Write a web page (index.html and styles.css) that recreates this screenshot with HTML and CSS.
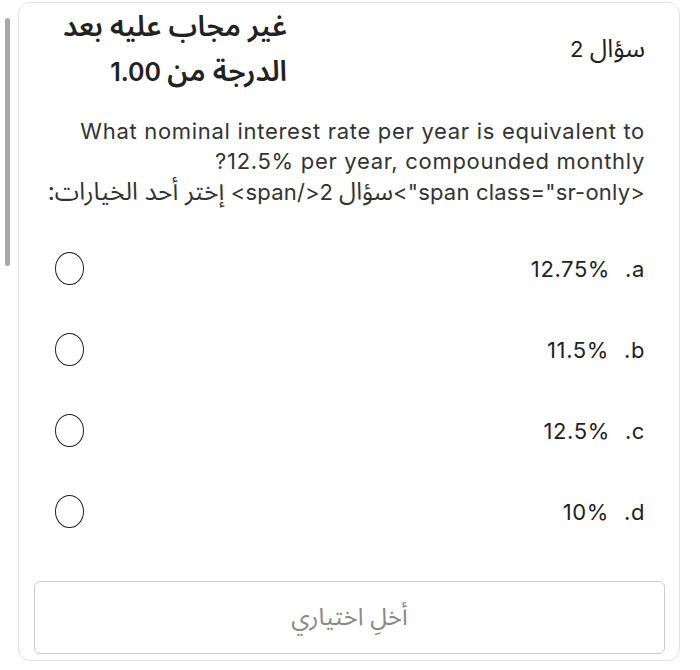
FILE: index.html
```html
<!DOCTYPE html>
<html lang="ar" dir="rtl">
<head>
<meta charset="utf-8">
<link rel="stylesheet" href="styles.css">
</head>
<body>
<div class="scrollbar"></div>
<div class="card">
  <div class="header">
    <div class="qno"><span class="ar">سؤال</span> 2</div>
    <div class="state">
      <div class="state-line"><span class="ar">غير مجاب عليه بعد</span></div>
      <div class="state-line"><span class="ar">الدرجة من</span> 1.00</div>
    </div>
  </div>
  <div class="question">
    <div>What nominal interest rate per year is equivalent to 12.5% per year, compounded monthly?</div>
    <div class="prompt">&lt;span class="sr-only"&gt;<span class="ar">سؤال</span> 2&lt;/span&gt; <span class="ar">إختر أحد الخيارات:</span></div>
  </div>
  <div class="options">
    <div class="option"><span class="num">a.</span><span class="txt">12.75%</span><span class="radio"></span></div>
    <div class="option"><span class="num">b.</span><span class="txt">11.5%</span><span class="radio"></span></div>
    <div class="option"><span class="num">c.</span><span class="txt">12.5%</span><span class="radio"></span></div>
    <div class="option"><span class="num">d.</span><span class="txt">10%</span><span class="radio"></span></div>
  </div>
  <div class="button"><span class="ar">أخلِ اختياري</span></div>
</div>
</body>
</html>
```
FILE: styles.css
```css
html, body {
  margin: 0;
  padding: 0;
  background: #ffffff;
}
body {
  width: 700px;
  height: 670px;
  position: relative;
  overflow: hidden;
  font-family: Inter, "Liberation Sans", "Noto Sans Arabic", "DejaVu Sans", sans-serif;
  color: #222222;
}
.ar {
  font-size: 1.15em;
  letter-spacing: 0;
}
.scrollbar {
  position: absolute;
  left: 5px;
  top: 18px;
  width: 5px;
  height: 248px;
  background: #a8a8a8;
  border-radius: 3px;
}
.card {
  position: absolute;
  left: 18px;
  top: 2px;
  width: 660px;
  height: 657px;
  border: 1.5px solid #e2e2e2;
  border-radius: 12px;
  box-sizing: content-box;
}
.header {
  display: flex;
  justify-content: space-between;
  padding: 1px 34px 0 44px;
}
.qno {
  font-size: 22px;
  line-height: 44px;
  margin-top: 22px;
}
.state {
  text-align: right;
}
.state-line {
  font-size: 25px;
  line-height: 44px;
  font-weight: 600;
}
.state-line .ar {
  font-size: 1.145em;
}
.question {
  margin-top: 22px;
  padding: 0 34px 0 10px;
  font-size: 22px;
  letter-spacing: 0.7px;
  line-height: 30px;
  color: #333333;
}
.prompt {
  white-space: nowrap;
  letter-spacing: 0.2px;
}
.prompt .ar {
  font-size: 1.12em;
}
.options {
  margin-top: 21px;
  padding: 0 34px 0 36px;
}
.option {
  display: flex;
  align-items: center;
  height: 81px;
  font-size: 22px;
  letter-spacing: 0.6px;
  color: #222222;
}
.num {
  margin-left: 15px;
}
.txt {
  flex: 1;
}
.radio {
  width: 27px;
  height: 31px;
  border: 1.6px solid #222222;
  border-radius: 50%;
}
.button {
  margin: 29px 14px 0 15px;
  height: 71px;
  border: 1.5px solid #cccccc;
  border-radius: 6px;
  display: flex;
  align-items: center;
  justify-content: center;
  font-size: 21px;
  color: #888888;
}
```
